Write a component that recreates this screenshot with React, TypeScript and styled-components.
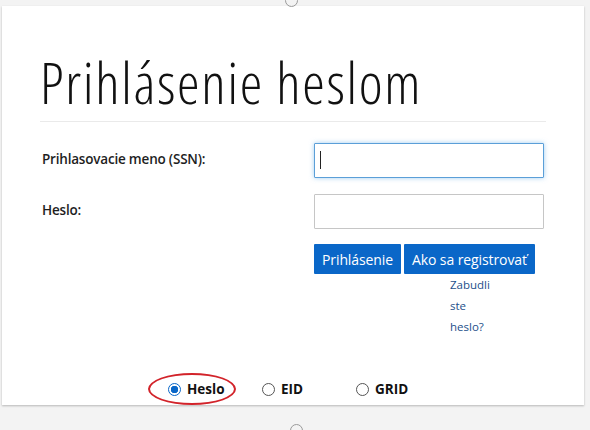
import styled, { createGlobalStyle } from "styled-components";

const GlobalStyle = createGlobalStyle`
    html, body {
        margin:0;
        padding:0;
        background:#f3f3f3;
        font-family:"Open Sans", "Noto Sans", sans-serif;
    }
`;

const Page = styled.div`
    position:relative;
    width:590px;
    height:430px;
    overflow:hidden;
    padding:6px 6px 0 2px;
    box-sizing:border-box;
`;

const Ring = styled.span<{ $top: number; $left: number }>`
    position:absolute;
    top:${p => p.$top}px;
    left:${p => p.$left}px;
    width:11px;
    height:11px;
    border:1.5px solid #9a9a9a;
    border-radius:50%;
`;

const Card = styled.main`
    background:#fff;
    height:399px;
    box-sizing:border-box;
    padding:44px 38px 0 38px;
    box-shadow:0 1px 2px rgba(0,0,0,0.25);
    display:flex;
    flex-direction:column;
`;

const Title = styled.h1`
    margin:0;
    font-weight:300;
    font-size:57px;
    font-stretch:80%;
    line-height:64px;
    letter-spacing:1.7px;
    color:#111;
    padding-bottom:7px;
    border-bottom:1px solid #eaeaea;
`;

const Form = styled.form`
    display:grid;
    grid-template-columns:272px 230px;
    row-gap:16px;
    margin-top:21px;
    padding-left:2px;
`;

const Label = styled.label`
    font-size:13.5px;
    font-weight:600;
    letter-spacing:-0.2px;
    color:#1e1e1e;
    align-self:center;
    margin-top:-4px;
`;

const Input = styled.input<{ $focused?: boolean }>`
    box-sizing:border-box;
    width:230px;
    height:35px;
    border:1px solid ${p => (p.$focused ? "#5b9fd8" : "#c6c6c6")};
    box-shadow:${p => (p.$focused ? "0 0 5px rgba(102,175,233,0.6)" : "none")};
    background:${p =>
        p.$focused
            ? "linear-gradient(#222, #222) 5px 7px / 1px 18px no-repeat #fff"
            : "#fff"};
    border-radius:1px;
    padding:0 6px;
    font-size:14px;
    outline:none;
`;

const Actions = styled.div`
    grid-column:2;
    display:flex;
    gap:3px;
    margin-top:-1px;
`;

const Button = styled.button`
    background:#0a67c8;
    color:#fff;
    border:none;
    border-radius:1px;
    height:30px;
    padding:0 8px;
    font-family:"Open Sans", sans-serif;
    font-size:14px;
    letter-spacing:-0.1px;
`;

const Forgot = styled.a`
    grid-column:2;
    margin:-16px 0 0 136px;
    width:50px;
    font-size:11.5px;
    line-height:21px;
    color:#1d4f8a;
    text-decoration:none;
`;

const Methods = styled.div`
    margin-top:auto;
    height:32px;
    display:flex;
    padding-left:128px;
    align-items:center;
`;

const Method = styled.label<{ $width: number }>`
    position:relative;
    width:${p => p.$width}px;
    display:flex;
    align-items:center;
    gap:6px;
    font-size:13.5px;
    font-weight:700;
    color:#111;
`;

const Radio = styled.input`
    appearance:none;
    margin:0;
    width:13px;
    height:13px;
    border-radius:50%;
    border:1px solid #555;
    background:#fff;
    &:checked{
        border-color:#0a67c8;
        background:radial-gradient(circle, #0a67c8 0 3.5px, #fff 4px);
    }
`;

const Highlight = styled.span`
    position:absolute;
    left:-20px;
    top:-7px;
    width:84px;
    height:28px;
    border:2px solid #d2232a;
    border-radius:50%;
    pointer-events:none;
`;

export default function App() {
    return (
        <>
            <GlobalStyle />
            <Page>
                <Ring $top={-6} $left={285} />
                <Card>
                    <Title>Prihlásenie heslom</Title>
                    <Form>
                        <Label>Prihlasovacie meno (SSN):</Label>
                        <Input $focused defaultValue="" />
                        <Label>Heslo:</Label>
                        <Input type="password" />
                        <Actions>
                            <Button type="button">Prihlásenie</Button>
                            <Button type="button">Ako sa registrovať</Button>
                        </Actions>
                        <Forgot href="#">Zabudli ste heslo?</Forgot>
                    </Form>
                    <Methods>
                        <Method $width={94}>
                            <Highlight />
                            <Radio type="radio" name="m" defaultChecked />
                            Heslo
                        </Method>
                        <Method $width={94}>
                            <Radio type="radio" name="m" />
                            EID
                        </Method>
                        <Method $width={60}>
                            <Radio type="radio" name="m" />
                            GRID
                        </Method>
                    </Methods>
                </Card>
                <Ring $top={424} $left={290} />
            </Page>
        </>
    );
}
